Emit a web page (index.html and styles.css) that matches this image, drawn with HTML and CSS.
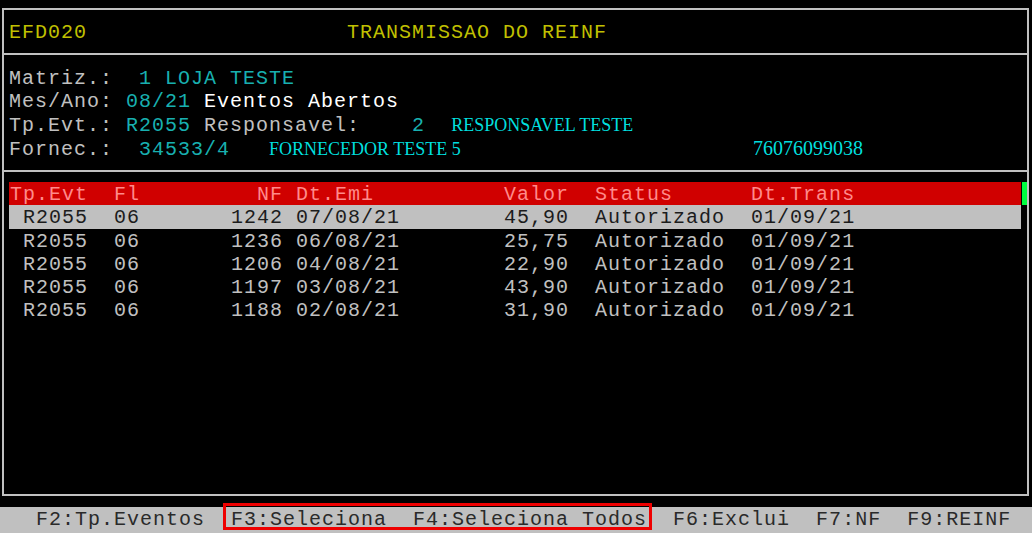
FILE: index.html
```html
<!DOCTYPE html>
<html lang="pt-br">
<head>
    <meta charset="UTF-8">
    <title>EFD020 - Transmissao do REINF</title>
    <link rel="stylesheet" href="styles.css">
</head>
<body>
    <div class="screen">
        <div class="frame">
            <!-- Titulo -->
            <div class="head">
                <div class="ln yel">EFD020                    TRANSMISSAO DO REINF</div>
            </div>

            <!-- Filtros -->
            <div class="info">
                <div class="ln">Matriz.:  <span class="cy">1 LOJA TESTE</span></div>
                <div class="ln">Mes/Ano: <span class="cy">08/21</span> <span class="wh">Eventos Abertos</span></div>
                <div class="ln">Tp.Evt.: <span class="cy">R2055</span> Responsavel:    <span class="cy">2</span>  <span class="serif">RESPONSAVEL TESTE</span></div>
                <div class="ln">Fornec.:  <span class="cy">34533/4</span>   <span class="serif forn-name">FORNECEDOR TESTE 5</span><span class="serif doc">76076099038</span></div>
            </div>

            <!-- Lista de eventos -->
            <div class="grid">
                <div class="grid-head">
                    <div class="ln th">Tp.Evt  Fl         NF Dt.Emi          Valor  Status      Dt.Trans</div>
                    <div class="mark"></div>
                </div>
                <div class="ln tr sel"> R2055  06       1242 07/08/21        45,90  Autorizado  01/09/21</div>
                <div class="ln tr"> R2055  06       1236 06/08/21        25,75  Autorizado  01/09/21</div>
                <div class="ln tr"> R2055  06       1206 04/08/21        22,90  Autorizado  01/09/21</div>
                <div class="ln tr"> R2055  06       1197 03/08/21        43,90  Autorizado  01/09/21</div>
                <div class="ln tr"> R2055  06       1188 02/08/21        31,90  Autorizado  01/09/21</div>
            </div>
        </div>

        <!-- Teclas de funcao -->
        <div class="keys">
            <div class="ln">  F2:Tp.Eventos  F3:Seleciona  F4:Seleciona Todos  F6:Exclui  F7:NF  F9:REINF</div>
            <div class="callout"></div>
        </div>
    </div>
</body>
</html>
```

FILE: styles.css
```css
html {
    box-sizing: border-box;
}
*, *:before, *:after {
    box-sizing: inherit;
}
body {
    margin: 0;
    padding: 0;
    background-color: #000;
    color: #c0c0c0;
    font-family: 'Liberation Mono', monospace;
    font-size: 20px;
    letter-spacing: 1px;
    overflow: hidden;
}

.screen {
    width: 1032px;
    height: 533px;
    position: relative;
}

/* Cada linha do terminal */
.ln {
    height: 23.25px;
    line-height: 25.25px;
    white-space: pre;
}

.frame {
    margin: 8px 0 0 2px;
    width: 1027px;
    height: 488px;
    border: 2px solid #c0c0c0;
    display: flex;
    flex-direction: column;
}

.head {
    height: 43px;
    padding: 10px 0 0 5px;
}

.info {
    height: 117px;
    padding: 11px 0 0 5px;
    border-top: 2px solid #c0c0c0;
}

.grid {
    flex: 1;
    padding: 10px 0 0 5px;
    border-top: 2px solid #c0c0c0;
}

.yel {
    color: #c0c000;
}
.cy {
    color: #18b0b0;
}
.wh {
    color: #fff;
}

.serif {
    font-family: 'Liberation Serif', serif;
    font-size: 18px;
    letter-spacing: 0;
    color: #00dede;
}
.forn-name {
    display: inline-block;
    width: 484px;
}
.doc {
    font-size: 20px;
}

.grid-head {
    display: flex;
}
.tr, .th {
    width: 1012px;
    padding-left: 1px;
}
.th {
    background-color: #d00000;
    color: #ff8a8a;
}
.mark {
    width: 5px;
    height: 23px;
    margin-left: 1px;
    background-color: #00ff40;
}
.sel {
    background-color: #c0c0c0;
    color: #1c1c1c;
}

/* Barra de teclas */
.keys {
    margin-top: 11px;
    height: 26px;
    padding-left: 10px;
    background-color: #c0c0c0;
    color: #2a2a2a;
    position: relative;
}
.keys .ln {
    margin-left: -10px;
    padding-left: 10px;
}
.callout {
    position: absolute;
    left: 223px;
    top: -4px;
    width: 429px;
    height: 27px;
    border: 3px solid #ee0000;
}
```
